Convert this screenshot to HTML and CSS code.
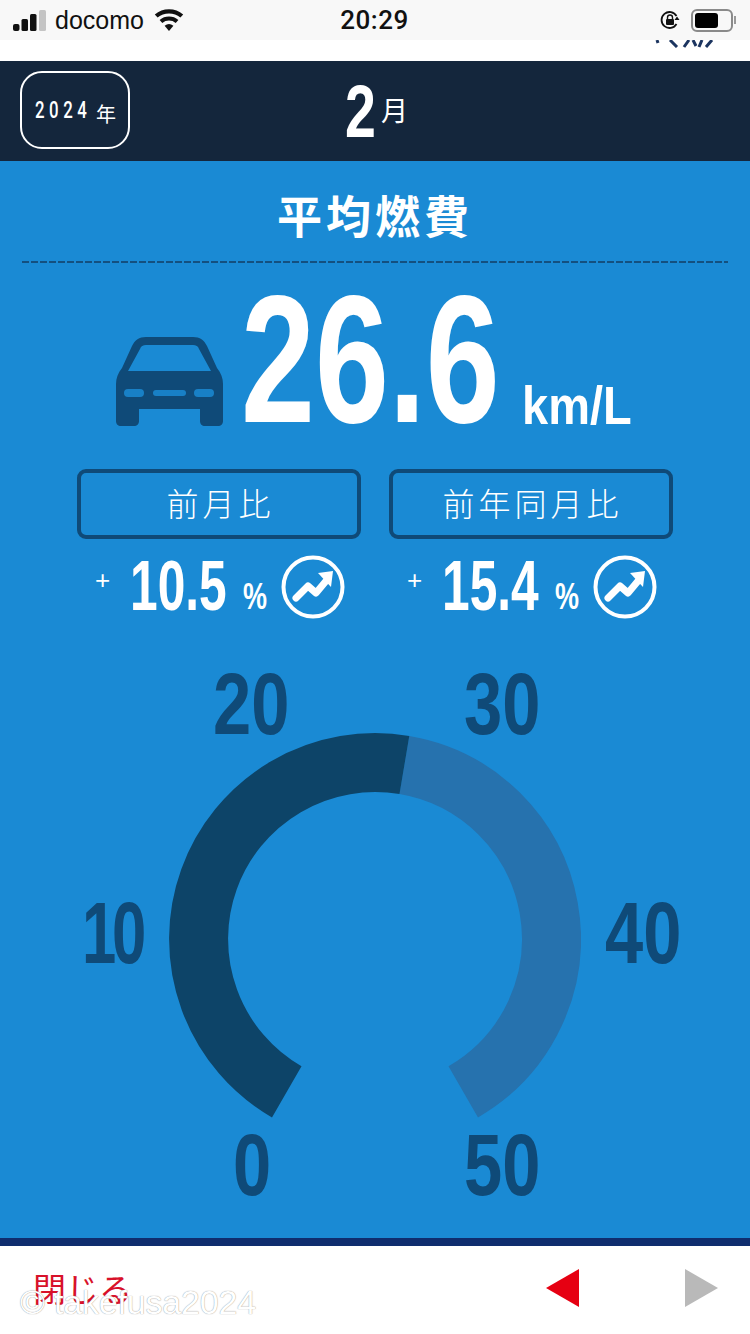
FILE: index.html
```html
<!DOCTYPE html>
<html lang="ja">
<head>
    <meta charset="UTF-8">
    <meta name="viewport" content="width=device-width, initial-scale=1.0">
    <title>平均燃費</title>
    <link rel="stylesheet" href="styles.css">
</head>
<body>
    <div class="status-bar">
        <div class="status-left">
            <svg class="signal" width="33" height="21" viewBox="0 0 33 21">
                <rect x="0" y="14" width="6.5" height="7" rx="2" fill="#111"/>
                <rect x="8.5" y="9" width="6.5" height="12" rx="1.5" fill="#111"/>
                <rect x="17" y="4" width="6.5" height="17" rx="1.5" fill="#111"/>
                <rect x="26" y="0" width="7" height="21" rx="1.5" fill="#c4c4c4"/>
            </svg>
            <span class="carrier">docomo</span>
            <svg class="wifi" width="30" height="22" viewBox="0 0 30 22">
                <path d="M15 22 L10.6 16.8 A7 7 0 0 1 19.4 16.8 Z" fill="#111"/>
                <path d="M8.3 14 L5.6 10.9 A14.5 14.5 0 0 1 24.4 10.9 L21.7 14 A10.5 10.5 0 0 0 8.3 14 Z" fill="#111"/>
                <path d="M3.6 8.6 L0.8 5.4 A22 22 0 0 1 29.2 5.4 L26.4 8.6 A18 18 0 0 0 3.6 8.6 Z" fill="#111"/>
            </svg>
        </div>
        <span class="clock">20:29</span>
        <div class="status-right">
            <svg class="rotation-lock" width="20" height="20" viewBox="0 0 20 20">
                <path d="M16.5 14 A8 8 0 1 1 16.5 6" fill="none" stroke="#111" stroke-width="1.8"/>
                <path d="M14.5 10 L19.5 10 L17 6.5 Z" fill="#111"/>
                <rect x="6" y="9" width="8" height="6" rx="1" fill="#111"/>
                <path d="M7.5 9 V7.5 A2.5 2.5 0 0 1 12.5 7.5 V9" fill="none" stroke="#111" stroke-width="1.4"/>
            </svg>
            <div class="battery"><div class="battery-level"></div></div>
            <div class="battery-cap"></div>
        </div>
    </div>

    <div class="top-strip">
        <svg class="logo-scrap" width="60" height="8" viewBox="0 0 60 8">
            <path d="M2 0 L3 3 M15 0 L22 7 M29 7 L34 0 M38 0 L41 6 M47 0 L44 7 M57 0 L51 7" fill="none" stroke="#1c3560" stroke-width="3"/>
        </svg>
    </div>

    <header class="date-bar">
        <div class="year-box"><span class="year-num">2024</span><span class="year-unit">年</span></div>
        <div class="month"><span class="month-num">2</span><span class="month-unit">月</span></div>
    </header>

    <main class="panel">
        <h1 class="title">平均燃費</h1>
        <div class="title-rule"></div>

        <div class="hero">
            <svg class="car" width="107" height="89" viewBox="0 0 107 89">
                <path fill-rule="evenodd" fill="#0f4a78" d="M30 0 H77 C84 0 88 3 91 9 L101 31 C105 36 107 41 107 47 V84 C107 87 105 89 102 89 H89 C86 89 84 87 84 84 V72 H23 V84 C23 87 21 89 18 89 H5 C2 89 0 87 0 84 V47 C0 41 2 36 6 31 L16 9 C19 3 23 0 30 0 Z M30 8 C27 8 25 9 24 12 L12 34 H95 L83 12 C82 9 80 8 77 8 Z"/>
                <rect x="8" y="52" width="20" height="8" rx="4" fill="#1a8ad4" opacity="0.85"/>
                <rect x="37" y="53" width="33" height="6" rx="3" fill="#1a8ad4" opacity="0.85"/>
                <rect x="78" y="52" width="20" height="8" rx="4" fill="#1a8ad4" opacity="0.85"/>
            </svg>
            <span class="hero-value">26.6</span>
            <span class="hero-unit">km/L</span>
        </div>

        <div class="compare">
            <div class="compare-col">
                <div class="compare-label">前月比</div>
                <div class="delta">
                    <span class="delta-sign">+</span>
                    <span class="delta-value">10.5</span>
                    <span class="delta-pct">%</span>
                    <svg class="trend" width="64" height="64" viewBox="0 0 64 64">
                        <circle cx="32" cy="32" r="29.5" fill="none" stroke="#fff" stroke-width="4"/>
                        <path d="M15 43 L27 31 L35 38 L45 26" fill="none" stroke="#fff" stroke-width="7" stroke-linejoin="round" stroke-linecap="round"/>
                        <path d="M37 18 L52 16 L50 32 Z" fill="#fff"/>
                    </svg>
                </div>
            </div>
            <div class="compare-col">
                <div class="compare-label">前年同月比</div>
                <div class="delta">
                    <span class="delta-sign">+</span>
                    <span class="delta-value">15.4</span>
                    <span class="delta-pct">%</span>
                    <svg class="trend" width="64" height="64" viewBox="0 0 64 64">
                        <circle cx="32" cy="32" r="29.5" fill="none" stroke="#fff" stroke-width="4"/>
                        <path d="M15 43 L27 31 L35 38 L45 26" fill="none" stroke="#fff" stroke-width="7" stroke-linejoin="round" stroke-linecap="round"/>
                        <path d="M37 18 L52 16 L50 32 Z" fill="#fff"/>
                    </svg>
                </div>
            </div>
        </div>

        <div class="gauge">
            <svg class="gauge-ring" width="412" height="412" viewBox="0 0 412 412">
                <path d="M235.4 32 A176.5 176.5 0 0 1 294.25 358.85" fill="none" stroke="#2672ae" stroke-width="59"/>
                <path d="M117.75 358.85 A176.5 176.5 0 0 1 235.4 32" fill="none" stroke="#0d4468" stroke-width="59"/>
            </svg>
            <span class="tick tick-0">0</span>
            <span class="tick tick-10">10</span>
            <span class="tick tick-20">20</span>
            <span class="tick tick-30">30</span>
            <span class="tick tick-40">40</span>
            <span class="tick tick-50">50</span>
        </div>
    </main>

    <footer class="footer">
        <span class="close-link">閉じる</span>
        <div class="pager">
            <div class="arrow arrow-prev"></div>
            <div class="arrow arrow-next"></div>
        </div>
        <span class="watermark">© takefusa2024</span>
    </footer>
</body>
</html>
```

FILE: styles.css
```css
html, body {
    margin: 0;
    padding: 0;
}

body {
    width: 750px;
    height: 1334px;
    overflow: hidden;
    background-color: #fff;
    font-family: "Liberation Sans", "Noto Sans CJK JP", sans-serif;
}

/* no narrow face installed, so the big numbers are squeezed sideways */
.year-num, .month-num, .hero-value, .hero-unit, .delta-value, .delta-pct, .tick {
    display: inline-block;
    font-family: "Liberation Sans", sans-serif;
    font-weight: 700;
    white-space: nowrap;
    transform-origin: left center;
}

/* status bar */
.status-bar {
    height: 40px;
    padding: 0 14px 0 13px;
    box-sizing: border-box;
    background-color: #f8f8f8;
    display: grid;
    grid-template-columns: 1fr auto 1fr;
    align-items: center;
    color: #111;
}

.status-left {
    display: flex;
    align-items: center;
}

.carrier {
    font-size: 25px;
    margin-left: 9px;
}

.wifi {
    margin-left: 10px;
}

.clock {
    font-family: Roboto, sans-serif;
    font-weight: 500;
    font-size: 26px;
    letter-spacing: 0.5px;
}

.status-right {
    display: flex;
    align-items: center;
    justify-content: flex-end;
}

.battery {
    width: 42px;
    height: 23px;
    margin-left: 11px;
    padding: 2px;
    box-sizing: border-box;
    border: 2px solid #8a8a8a;
    border-radius: 6px;
}

.battery-level {
    width: 23px;
    height: 100%;
    background-color: #000;
    border-radius: 3px;
}

.battery-cap {
    width: 2px;
    height: 8px;
    margin-left: 1px;
    background-color: #999;
}

.top-strip {
    height: 21px;
    display: flex;
    justify-content: flex-end;
    align-items: flex-start;
    padding-right: 35px;
}

/* year / month */
.date-bar {
    height: 100px;
    background-color: #14263c;
    color: #fff;
    padding: 10px 0 0 20px;
    box-sizing: border-box;
    display: flex;
    align-items: flex-start;
}

.year-box {
    width: 110px;
    height: 78px;
    box-sizing: border-box;
    border: 2px solid #fff;
    border-radius: 22px;
    display: flex;
    align-items: center;
    padding-left: 13px;
}

.year-num {
    width: 56px;
    font-family: Roboto, sans-serif;
    font-weight: 500;
    font-size: 24px;
    letter-spacing: 6.5px;
    transform: scaleX(0.7);
}

.year-unit {
    font-family: "Noto Sans CJK JP", sans-serif;
    font-size: 20px;
    margin-left: 5px;
    margin-top: 6px;
}

.month {
    margin-left: 215px;
    display: flex;
    align-items: center;
    height: 82px;
}

.month-num {
    width: 31px;
    font-size: 74px;
    line-height: 82px;
    transform: scaleX(0.75);
}

.month-unit {
    font-family: "Noto Sans CJK JP", sans-serif;
    font-size: 27px;
    margin-left: 5px;
    margin-top: -6px;
}

/* main panel */
.panel {
    height: 1085px;
    box-sizing: border-box;
    background-color: #1a8ad4;
    border-bottom: 8px solid #0f2d6e;
    color: #fff;
    padding-top: 25px;
}

.title {
    margin: -2px 0 3px;
    height: 64px;
    line-height: 62px;
    text-align: center;
    font-family: "Noto Sans CJK JP", sans-serif;
    font-size: 45px;
    font-weight: 700;
    letter-spacing: 4px;
}

.title-rule {
    height: 1.5px;
    margin: 13px 22px 0;
    background: repeating-linear-gradient(to right, #14507f 0 7px, transparent 7px 9px);
}

.hero {
    height: 191px;
    display: flex;
    align-items: flex-end;
    padding-left: 116px;
    box-sizing: border-box;
}

.car {
    margin-bottom: 28px;
}

.hero-value {
    width: 252px;
    font-size: 182px;
    line-height: 182px;
    margin-left: 18px;
    margin-bottom: 4px;
    transform: scaleX(0.73);
}

.hero-unit {
    width: 110px;
    font-size: 54px;
    line-height: 54px;
    margin-left: 29px;
    margin-bottom: 22px;
    transform: scaleX(0.87);
}

.compare {
    display: flex;
    gap: 28px;
    padding-left: 77px;
    margin-top: 15px;
}

.compare-col {
    width: 284px;
}

.compare-label {
    height: 70px;
    box-sizing: border-box;
    border: 4px solid #0f4a78;
    border-radius: 9px;
    padding: 0 0 4px 3px;
    display: flex;
    align-items: center;
    justify-content: center;
    font-family: "Noto Sans CJK JP", sans-serif;
    font-size: 32px;
    font-weight: 300;
    letter-spacing: 4px;
}

.delta {
    display: flex;
    align-items: flex-end;
    height: 80px;
    padding-left: 18px;
}

.delta-sign {
    font-size: 26px;
    line-height: 26px;
    margin-bottom: 26px;
}

.delta-value {
    width: 100px;
    font-size: 70px;
    line-height: 70px;
    margin-left: 20px;
    margin-bottom: -2px;
    transform: scaleX(0.71);
}

.delta-pct {
    width: 24px;
    font-size: 36px;
    line-height: 36px;
    margin-left: 13px;
    margin-bottom: 4px;
    transform: scaleX(0.75);
}

.trend {
    flex-shrink: 0;
    margin-left: 14px;
}

/* gauge, ticks sit on a free canvas round the ring */
.gauge {
    position: relative;
    height: 540px;
    display: flex;
    justify-content: center;
    padding-top: 114px;
    box-sizing: border-box;
}

.tick {
    position: absolute;
    font-size: 88px;
    line-height: 88px;
    color: #0f4a78;
    transform: scaleX(0.78);
}

.tick-0 { left: 233px; top: 502px; }
.tick-10 { left: 82px; top: 270px; letter-spacing: -6px; transform: scaleX(0.7); }
.tick-20 { left: 213px; top: 41px; }
.tick-30 { left: 464px; top: 41px; }
.tick-40 { left: 605px; top: 270px; }
.tick-50 { left: 464px; top: 502px; }

/* footer */
.footer {
    position: relative;
    height: 88px;
    box-sizing: border-box;
    display: flex;
    align-items: center;
    justify-content: space-between;
    padding: 0 32px 4px 33px;
}

.close-link {
    font-family: "Noto Sans CJK JP", sans-serif;
    font-size: 33px;
    color: #d8112a;
}

.pager {
    display: flex;
    gap: 106px;
}

.arrow {
    width: 0;
    height: 0;
    border-top: 19px solid transparent;
    border-bottom: 19px solid transparent;
}

.arrow-prev {
    border-right: 33px solid #e60012;
}

.arrow-next {
    border-left: 33px solid #b9b9b9;
}

.watermark {
    position: absolute;
    left: 20px;
    top: 37px;
    font-size: 34px;
    letter-spacing: -0.2px;
    color: #fff;
    text-shadow: 0 0 1px #777;
}
```
